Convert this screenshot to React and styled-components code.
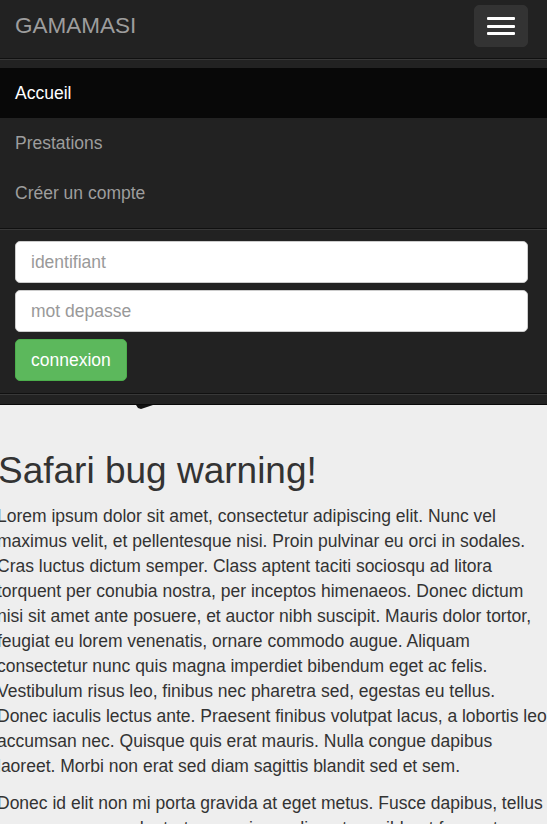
import styled, { createGlobalStyle } from "styled-components";

const Global = createGlobalStyle`
  html, body {
    margin: 0;
    padding: 0;
    background: #eee;
    font-family: "Liberation Sans", Arial, sans-serif;
    font-size: 17.5px;
    color: #333;
  }
  * { box-sizing: border-box; }
`;

const Navbar = styled.nav`
  background: #222;
  border-bottom: 1px solid #080808;
`;

const Header = styled.div`
  display: flex;
  justify-content: space-between;
  align-items: flex-start;
  height: 58px;
  padding: 5px 19px 0 15px;
`;

const Brand = styled.a`
  color: #9d9d9d;
  font-size: 22.5px;
  line-height: 42px;
  text-decoration: none;
`;

const Toggle = styled.button`
  width: 54px;
  height: 42px;
  background: #333;
  border: 1px solid #333;
  border-radius: 5px;
  padding: 0 12px;
  display: flex;
  flex-direction: column;
  justify-content: center;
  align-items: center;
  gap: 4.5px;
`;

const Bar = styled.span`
  display: block;
  width: 28px;
  height: 3px;
  background: #fff;
  border-radius: 1px;
`;

const Collapse = styled.div`
  border-top: 1px solid #101010;
  box-shadow: inset 0 1px 0 rgba(255, 255, 255, 0.1);
`;

const NavList = styled.ul`
  list-style: none;
  margin: 0;
  padding: 9px 0 10px;
`;

const NavItem = styled.li`
  height: 50px;
  line-height: 50px;
  padding: 0 15px;
  background: ${(p) => (p.active ? "#080808" : "transparent")};
  color: ${(p) => (p.active ? "#fff" : "#9d9d9d")};
`;

const Form = styled.form`
  display: flex;
  flex-direction: column;
  align-items: flex-start;
  gap: 7px;
  padding: 12px 19px 12px 15px;
  margin-bottom: 10px;
  border-top: 1px solid #101010;
  border-bottom: 1px solid #101010;
  box-shadow: inset 0 1px 0 rgba(255, 255, 255, 0.1), 0 1px 0 rgba(255, 255, 255, 0.1);
`;

const Input = styled.input`
  width: 100%;
  height: 42px;
  padding: 0 15px;
  font-family: inherit;
  font-size: 17.5px;
  color: #555;
  background: #fff;
  border: 1px solid #ccc;
  border-radius: 5px;
  outline: none;
  &::placeholder { color: #999; }
`;

const Button = styled.button`
  height: 42px;
  padding: 0 15px;
  font-family: inherit;
  font-size: 17.5px;
  color: #fff;
  background: #5cb85c;
  border: 1px solid #4cae4c;
  border-radius: 5px;
`;

const Main = styled.main`
  position: relative;
  background: #eee;
  padding-top: 1px;
`;

// the little dark shape poking out under the navbar
const Notch = styled.svg`
  position: absolute;
  left: 136px;
  top: 0;
`;

const Content = styled.div`
  margin: 0 -8px 0 -3px;
`;

const Title = styled.h1`
  font-size: 37px;
  font-weight: 500;
  line-height: 40px;
  margin: 45px 0 13px 1px;
`;

const Para = styled.p`
  line-height: 25px;
  margin: 0 0 12px;
`;

export default function App() {
  return (
    <>
      <Global />
      <Navbar>
        <Header>
          <Brand href="#">GAMAMASI</Brand>
          <Toggle type="button">
            <Bar />
            <Bar />
            <Bar />
          </Toggle>
        </Header>
        <Collapse>
          <NavList>
            <NavItem active>Accueil</NavItem>
            <NavItem>Prestations</NavItem>
            <NavItem>Créer un compte</NavItem>
          </NavList>
          <Form onSubmit={(e) => e.preventDefault()}>
            <Input placeholder="identifiant" />
            <Input type="password" placeholder="mot depasse" />
            <Button type="submit">connexion</Button>
          </Form>
        </Collapse>
      </Navbar>
      <Main>
        <Notch width="18" height="5" viewBox="0 0 18 5">
          <polygon points="0,0 17,0 5,4 2,3" fill="#111" />
        </Notch>
        <Content>
          <Title>Safari bug warning!</Title>
          <Para>
            Lorem ipsum dolor sit amet, consectetur adipiscing elit. Nunc vel<br />
            maximus velit, et pellentesque nisi. Proin pulvinar eu orci in sodales.<br />
            Cras luctus dictum semper. Class aptent taciti sociosqu ad litora<br />
            torquent per conubia nostra, per inceptos himenaeos. Donec dictum<br />
            nisi sit amet ante posuere, et auctor nibh suscipit. Mauris dolor tortor,<br />
            feugiat eu lorem venenatis, ornare commodo augue. Aliquam<br />
            consectetur nunc quis magna imperdiet bibendum eget ac felis.<br />
            Vestibulum risus leo, finibus nec pharetra sed, egestas eu tellus.<br />
            Donec iaculis lectus ante. Praesent finibus volutpat lacus, a lobortis leo<br />
            accumsan nec. Quisque quis erat mauris. Nulla congue dapibus<br />
            laoreet. Morbi non erat sed diam sagittis blandit sed et sem.
          </Para>
          <Para>
            Donec id elit non mi porta gravida at eget metus. Fusce dapibus, tellus<br />
            ac cursus commodo, tortor mauris condimentum nibh, ut fermentum massa justo sit amet risus.
          </Para>
        </Content>
      </Main>
    </>
  );
}
